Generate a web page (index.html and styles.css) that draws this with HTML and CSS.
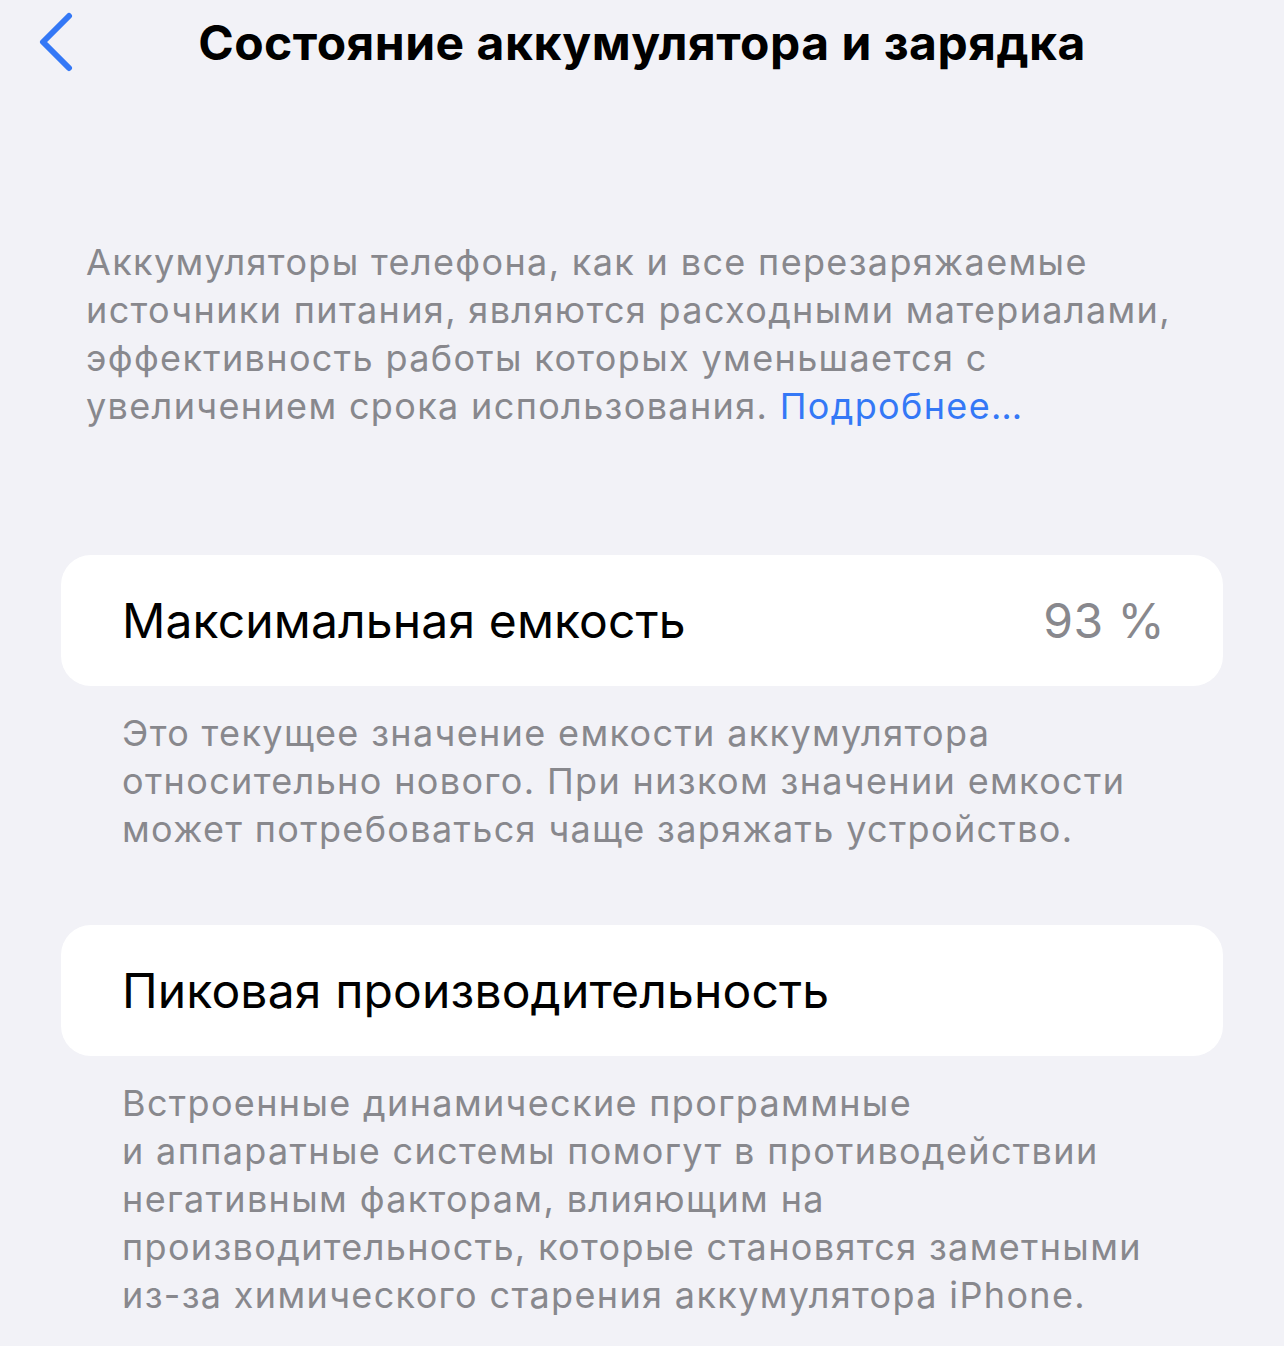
FILE: index.html
```html
<!DOCTYPE html>
<html lang="ru">
<head>
<meta charset="utf-8">
<title>Состояние аккумулятора и зарядка</title>
<link rel="stylesheet" href="styles.css">
</head>
<body>
<header class="nav">
  <a class="nav-back" href="#" aria-label="Назад">
    <svg width="36" height="60" viewBox="0 0 36 60" aria-hidden="true">
      <path d="M31 4 L5 30 L31 56" fill="none" stroke="#3478f6" stroke-width="6" stroke-linecap="round" stroke-linejoin="round"/>
    </svg>
  </a>
  <h1 class="nav-title">Состояние аккумулятора и зарядка</h1>
</header>

<main class="content">
  <p class="intro">Аккумуляторы телефона, как и все перезаряжаемые<br>источники питания, являются расходными материалами,<br>эффективность работы которых уменьшается с<br>увеличением срока использования. <a class="link" href="#">Подробнее…</a></p>

  <section class="group">
    <div class="cell">
      <span class="cell-label">Максимальная емкость</span>
      <span class="cell-value">93 %</span>
    </div>
    <p class="footnote">Это текущее значение емкости аккумулятора<br>относительно нового. При низком значении емкости<br>может потребоваться чаще заряжать устройство.</p>
  </section>

  <section class="group">
    <div class="cell">
      <span class="cell-label">Пиковая производительность</span>
    </div>
    <p class="footnote">Встроенные динамические программные<br>и аппаратные системы помогут в противодействии<br>негативным факторам, влияющим на<br>производительность, которые становятся заметными<br>из-за химического старения аккумулятора iPhone.</p>
  </section>
</main>
</body>
</html>
```

FILE: styles.css
```css
html, body {
  margin: 0;
  padding: 0;
}

body {
  background: #f2f2f7;
  font-family: "Inter", "Liberation Sans", sans-serif;
  color: #000;
  width: 1284px;
  height: 1346px;
  overflow: hidden;
}

.nav {
  position: relative;
  height: 86px;
  display: flex;
  align-items: center;
  justify-content: center;
}

.nav-back {
  position: absolute;
  left: 38px;
  top: 12px;
  display: block;
  width: 36px;
  height: 60px;
}

.nav-title {
  margin: 0;
  font-size: 48px;
  font-weight: 700;
  line-height: 86px;
  letter-spacing: 0.5px;
}

.content {
  padding: 152px 61px 0;
}

.intro {
  margin: 0 0 125px;
  padding-left: 25px;
  font-size: 36px;
  line-height: 48px;
  letter-spacing: 1.35px;
  color: #88888d;
}

.link {
  color: #3478f6;
  text-decoration: none;
}

.group {
  margin-bottom: 72px;
}

.cell {
  background: #fff;
  border-radius: 30px;
  height: 131px;
  padding: 0 58px 0 61px;
  display: flex;
  align-items: center;
  justify-content: space-between;
}

.cell-label {
  font-size: 48px;
  letter-spacing: 0.15px;
  color: #000;
}

.cell-value {
  font-size: 48px;
  letter-spacing: 0.4px;
  color: #88888d;
}

.footnote {
  margin: 23px 0 0;
  padding-left: 61px;
  font-size: 36px;
  line-height: 48px;
  letter-spacing: 1.35px;
  color: #88888d;
}
```
